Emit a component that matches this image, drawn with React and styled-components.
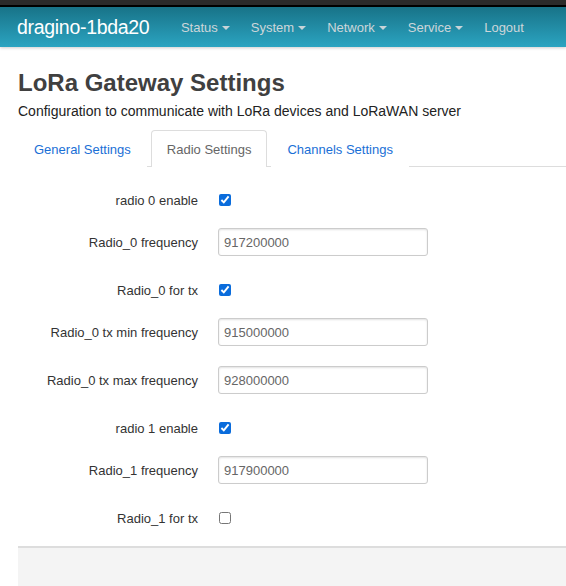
import styled, { createGlobalStyle } from "styled-components";

const GlobalStyle = createGlobalStyle`
body {
  margin: 0;
  background: #fff;
  font-family: "Liberation Sans", Arial, sans-serif;
  overflow: hidden;
}
`

const menu = ["Status", "System", "Network", "Service"]

const rows = [
  { label: "radio 0 enable", type: "check", checked: true },
  { label: "Radio_0 frequency", type: "text", value: "917200000" },
  { label: "Radio_0 for tx", type: "check", checked: true },
  { label: "Radio_0 tx min frequency", type: "text", value: "915000000" },
  { label: "Radio_0 tx max frequency", type: "text", value: "928000000" },
  { label: "radio 1 enable", type: "check", checked: true },
  { label: "Radio_1 frequency", type: "text", value: "917900000" },
  { label: "Radio_1 for tx", type: "check", checked: false },
]

const App = () => {
  return (
    <>
      <GlobalStyle />
      <TopStrip />
      <NavBar>
        <Brand>dragino-1bda20</Brand>
        <NavList>
          {menu.map((m) => (
            <NavItem key={m}>
              {m}
              <Caret />
            </NavItem>
          ))}
          <NavItem>Logout</NavItem>
        </NavList>
      </NavBar>
      <Main>
        <Title>LoRa Gateway Settings</Title>
        <Subtitle>Configuration to communicate with LoRa devices and LoRaWAN server</Subtitle>
        <Tabs>
          <Tab>General Settings</Tab>
          <Tab active>Radio Settings</Tab>
          <Tab>Channels Settings</Tab>
        </Tabs>
        <Section>
          {rows.map((r) => (
            <Row key={r.label} check={r.type === "check"}>
              <Label>{r.label}</Label>
              {r.type === "check" ? (
                <Check type="checkbox" defaultChecked={r.checked} />
              ) : (
                <TextInput type="text" defaultValue={r.value} />
              )}
            </Row>
          ))}
        </Section>
        <Footer />
      </Main>
    </>
  )
}

const TopStrip = styled.div`
height: 5px;
background: #2b2b2b;
border-bottom: 2px solid #000;
`

const NavBar = styled.div`
height: 40px;
display: flex;
align-items: center;
padding-left: 17px;
background: linear-gradient(to bottom, #187388, #2ba4c1);
box-shadow: 0 1px 3px rgba(0, 0, 0, 0.2);
`

const Brand = styled.div`
color: #fff;
font-size: 19.5px;
font-family: "Liberation Sans", Arial, sans-serif;
letter-spacing: -0.3px;
margin-right: 21px;
`

const NavList = styled.div`
display: flex;
align-items: center;
`

const NavItem = styled.div`
color: #cdd6da;
font-size: 13px;
padding: 0 10.5px;
display: flex;
align-items: center;
`

const Caret = styled.span`
display: inline-block;
margin-left: 4px;
margin-top: 2px;
border-left: 4px solid transparent;
border-right: 4px solid transparent;
border-top: 4px solid #c8d4d8;
`

const Main = styled.div`
padding-left: 18px;
padding-top: 22px;
`

const Title = styled.h1`
margin: 0;
font-size: 24px;
font-weight: bold;
color: #404040;
line-height: 28px;
`

const Subtitle = styled.p`
margin: 6px 0 0;
font-size: 14px;
color: #222;
line-height: 17px;
`

const Tabs = styled.div`
display: flex;
gap: 4px;
margin-top: 10px;
border-bottom: 1px solid #ddd;
height: 36px;
`

const Tab = styled.div`
padding: 0 15px;
font-size: 13px;
line-height: 37px;
height: 37px;
box-sizing: border-box;
color: ${(p) => (p.active ? "#666" : "#1a6fd6")};
background: #fff;
border: 1px solid ${(p) => (p.active ? "#ddd" : "transparent")};
border-bottom: none;
border-radius: 4px 4px 0 0;
`

const Section = styled.div`
padding-top: 19px;
`

const Row = styled.div`
display: flex;
align-items: center;
height: 28px;
margin-bottom: ${(p) => (p.check ? "14px" : "20px")};
`

const Label = styled.div`
width: 180px;
text-align: right;
padding-right: 20px;
box-sizing: content-box;
font-size: 13px;
color: #333;
`

const Check = styled.input`
width: 12px;
height: 12px;
margin: 0 0 0 1px;
accent-color: #0a6cdc;
`

const TextInput = styled.input`
width: 210px;
height: 28px;
box-sizing: border-box;
border: 1px solid #ccc;
border-radius: 3px;
box-shadow: inset 0 1px 2px rgba(0, 0, 0, 0.12);
padding: 0 5px;
font-size: 13px;
font-family: "Liberation Sans", Arial, sans-serif;
color: #666;
outline: none;
`

const Footer = styled.div`
height: 60px;
background: #f4f4f4;
border-top: 2px solid #ddd;
`

export default App
